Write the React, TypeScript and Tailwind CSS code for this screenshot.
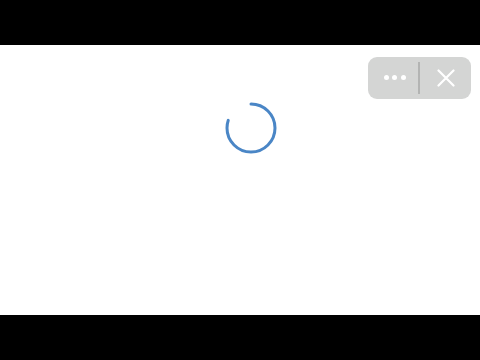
import React from "react";

export default function App() {
  const r = 24;
  const c = 2 * Math.PI * r;
  const arc = (287 / 360) * c;
  return (
    <div className="w-[480px] h-[360px] flex flex-col bg-black" style={{ fontFamily: "'Liberation Sans', sans-serif" }}>
      <div className="h-[45px] bg-black" />
      <div className="relative flex-1 bg-white">
        <div className="flex justify-center pl-[21px] pt-[56px]">
          <svg width="54" height="54" viewBox="0 0 54 54">
            <circle
              cx="27"
              cy="27"
              r={r}
              fill="none"
              stroke="#4a86c6"
              strokeWidth="3"
              strokeLinecap="round"
              strokeDasharray={`${arc} ${c}`}
              transform="rotate(-90 27 27)"
            />
          </svg>
        </div>
        <div className="absolute top-[12px] right-[9px] w-[103px] h-[42px] rounded-[9px] bg-[#d4d5d4] flex items-center">
          <div className="w-[50px] h-full flex items-center justify-center gap-[3.5px] pl-[3px] pb-[1px]">
            <span className="w-[5px] h-[5px] rounded-full bg-white" />
            <span className="w-[5px] h-[5px] rounded-full bg-white" />
            <span className="w-[5px] h-[5px] rounded-full bg-white" />
          </div>
          <div className="w-[2px] h-[32px] bg-[#b3b4b3]" />
          <div className="flex-1 h-full flex items-center justify-center pb-[1px]">
            <svg width="18" height="18" viewBox="0 0 18 18">
              <path d="M1.5 1.5 L16.5 16.5 M16.5 1.5 L1.5 16.5" stroke="white" strokeWidth="2.2" strokeLinecap="round" />
            </svg>
          </div>
        </div>
      </div>
      <div className="h-[45px] bg-black" />
    </div>
  );
}
